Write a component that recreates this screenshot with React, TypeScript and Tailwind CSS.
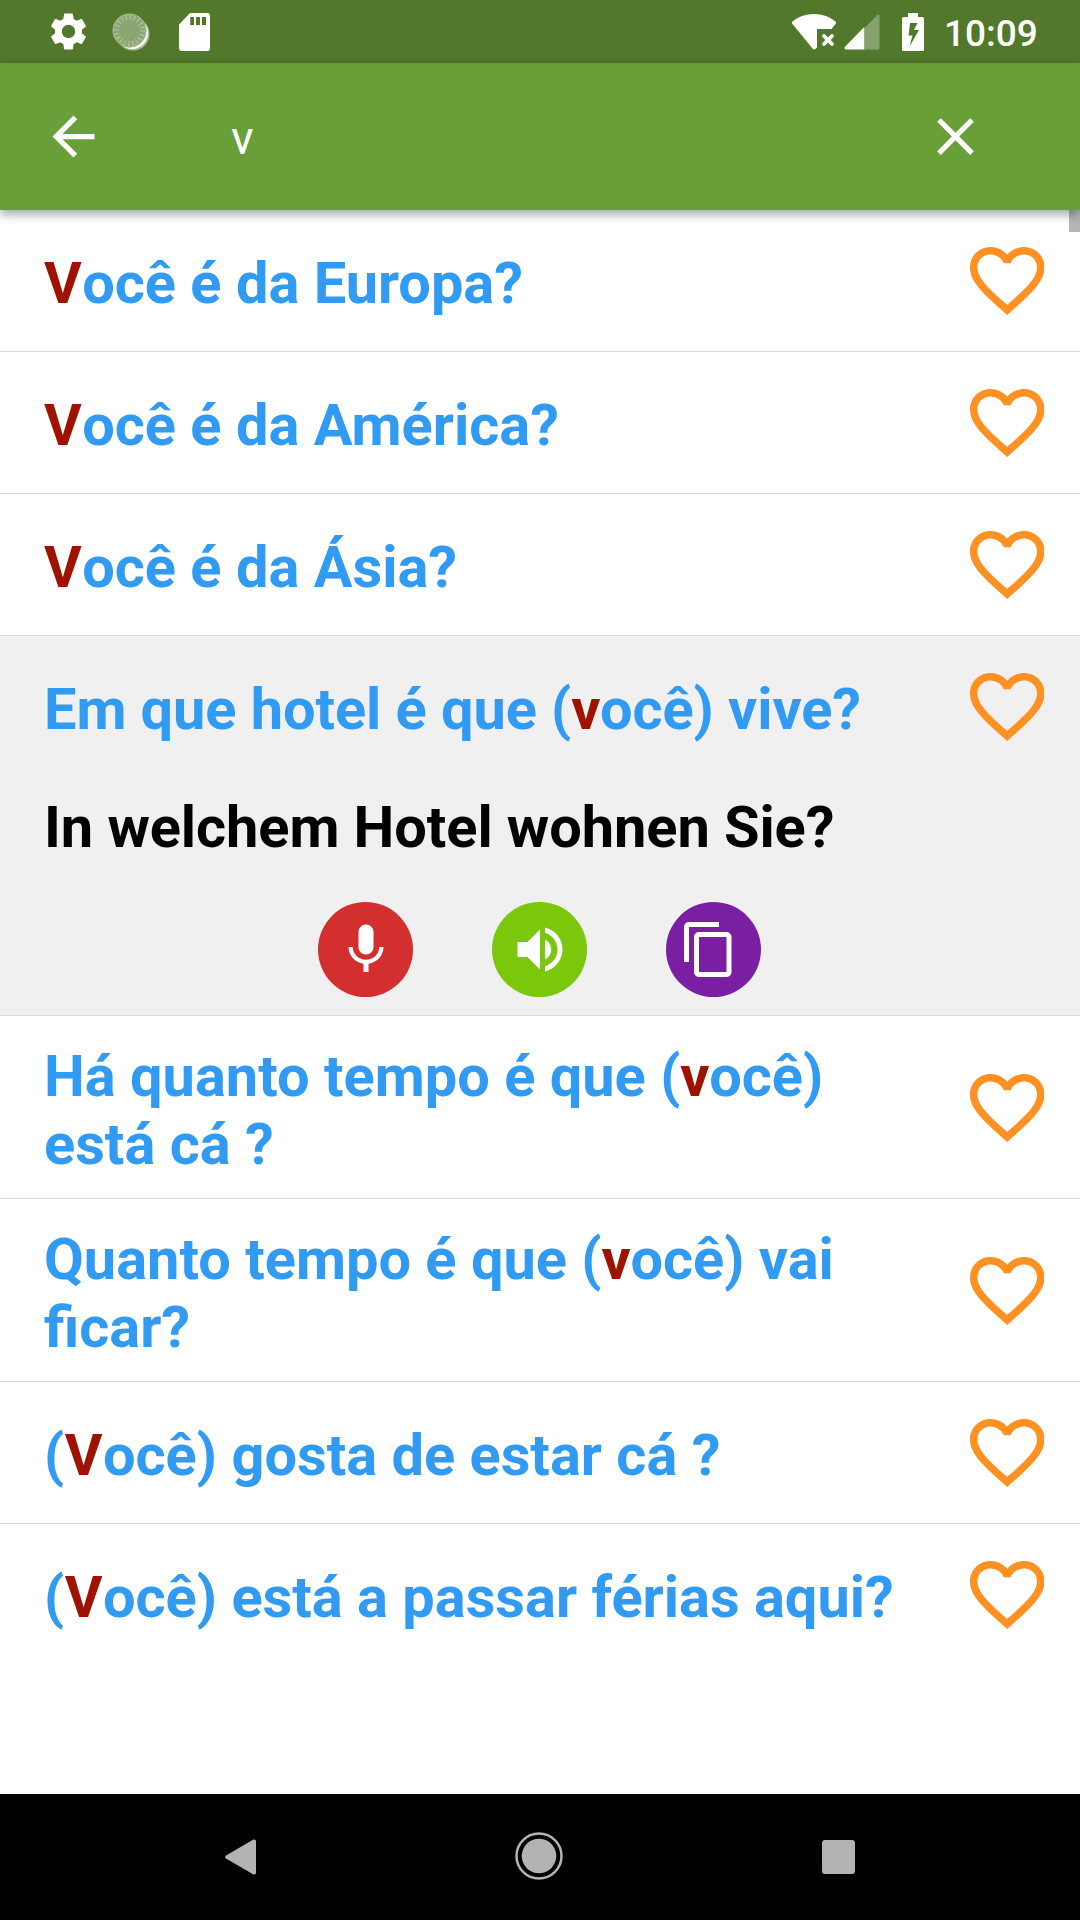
import React from 'react';

interface Phrase {
  id: number;
  text: string;
  translation?: string;
}

const QUERY = 'v';

const PHRASES: Phrase[] = [
  { id: 1, text: 'Você é da Europa?' },
  { id: 2, text: 'Você é da América?' },
  { id: 3, text: 'Você é da Ásia?' },
  { id: 4, text: 'Em que hotel é que (você) vive?', translation: 'In welchem Hotel wohnen Sie?' },
  { id: 5, text: 'Há quanto tempo é que (você) está cá ?' },
  { id: 6, text: 'Quanto tempo é que (você) vai ficar?' },
  { id: 7, text: '(Você) gosta de estar cá ?' },
  { id: 8, text: '(Você) está a passar férias aqui?' },
];

// Only the first occurrence of the query is coloured
const Highlighted: React.FC<{ text: string }> = ({ text }) => {
  const index = text.toLowerCase().indexOf(QUERY);
  if (index < 0) return <>{text}</>;
  const match = text.slice(index, index + QUERY.length);
  return (
    <>
      {text.slice(0, index)}
      <span className={`text-[#a01200] ${match === match.toUpperCase() ? 'mr-[0.4px]' : ''}`}>{match}</span>
      {text.slice(index + QUERY.length)}
    </>
  );
};

const HeartIcon = () => (
  <svg viewBox="2 3 20 18.35" preserveAspectRatio="none" className="w-[74.5px] h-[68px] shrink-0" fill="#ff9122">
    <path d="M16.500 3c-1.740 0-3.410.81-4.500 2.090C10.910 3.810 9.240 3 7.500 3 4.420 3 2 5.420 2 8.500c0 3.780 3.400 6.860 8.550 11.540L12 21.350l1.450-1.320C18.600 15.360 22 12.280 22 8.500 22 5.420 19.580 3 16.500 3zm-4.400 15.550l-.1.100-.1-.1C7.140 14.240 4 11.390 4 8.500 4 6.500 5.500 5 7.500 5c1.540 0 3.040.99 3.570 2.360h1.870C13.460 5.990 14.960 5 16.500 5c2 0 3.500 1.500 3.500 3.500 0 2.890-3.140 5.740-7.900 10.050z" />
  </svg>
);

const StatusBar = () => (
  <div className="h-[63px] bg-[#51782b] flex items-center justify-between text-white">
    <div className="flex items-center pl-[47px]">
      <svg viewBox="0 0 24 24" className="w-[43px] h-[45px]" fill="currentColor">
        <path d="M19.43 12.98c.04-.32.07-.64.07-.98s-.03-.66-.07-.98l2.11-1.65c.19-.15.24-.42.12-.64l-2-3.46c-.12-.22-.39-.3-.61-.22l-2.49 1c-.52-.4-1.08-.73-1.69-.98l-.38-2.65C14.46 2.18 14.25 2 14 2h-4c-.25 0-.46.18-.49.42l-.38 2.65c-.61.25-1.17.59-1.69.98l-2.49-1c-.23-.09-.49 0-.61.22l-2 3.46c-.13.22-.07.49.12.64l2.11 1.65c-.04.32-.07.65-.07.98s.03.66.07.98l-2.11 1.65c-.19.15-.24.42-.12.64l2 3.46c.12.22.39.3.61.22l2.49-1c.52.4 1.08.73 1.69.98l.38 2.65c.03.24.24.42.49.42h4c.25 0 .46-.18.49-.42l.38-2.65c.61-.25 1.17-.59 1.69-.98l2.49 1c.23.09.49 0 .61-.22l2-3.46c.12-.22.07-.49-.12-.64l-2.11-1.65zM12 15.700c-2.040 0-3.700-1.660-3.700-3.700s1.660-3.700 3.700-3.700 3.700 1.660 3.700 3.700-1.660 3.700-3.700 3.700z" />
      </svg>
      <svg viewBox="0 0 38 38" className="w-[38px] h-[38px] ml-[22px]">
        <circle cx="21" cy="21" r="16.5" fill="#a9bd95" />
        <circle cx="20" cy="20" r="16" fill="#fff" />
        <circle cx="17.5" cy="17.5" r="17" fill="#8ba673" />
        <circle cx="17.5" cy="17.5" r="16.4" fill="none" stroke="#a9bd95" strokeWidth="1" />
        <circle cx="17.5" cy="17.5" r="13" fill="none" stroke="#b5c7a4" strokeWidth="5" strokeDasharray="1.1 2.984" />
      </svg>
      <svg viewBox="0 0 31 38" className="w-[31px] h-[38px] ml-[29px]" fill="currentColor">
        <path fillRule="evenodd" d="M11 0H28Q31 0 31 3V35Q31 38 28 38H3Q0 38 0 35V11.5ZM11.2 4V12H15V4ZM17 4V12H21V4ZM23 4V12H27V4Z" />
      </svg>
    </div>
    <div className="flex items-center pr-[42px]">
      <svg viewBox="0 0 45 38" className="w-[45px] h-[38px]" fill="currentColor">
        <path d="M0.5 8.5Q9 1 22 1T43.5 8.5Q44.5 9.5 43.5 11L39.5 16H25V34.5L23.5 36Q22 37 20.5 35.5L0.5 11Q-.5 9.5.5 8.5Z" />
        <path d="M32 23L40 31M40 23L32 31" stroke="currentColor" strokeWidth="3.8" strokeLinecap="round" />
      </svg>
      <svg viewBox="0 0 36 36" className="w-[36px] h-[36px] ml-[7px]">
        <path d="M20 14.5L33 1.2Q35.5-.5 35.5 2V34Q35.5 35.5 34 35.5H20Z" fill="#86a16b" />
        <path d="M20.2 13V35.5H2Q-.5 35 1 32.8Z" fill="#fff" />
      </svg>
      <svg viewBox="0 0 22 38" className="w-[22px] h-[38px] ml-[22px]" fill="currentColor">
        <path fillRule="evenodd" d="M6 0H16V4H20.5Q22 4 22 5.5V36.5Q22 38 20.5 38H1.5Q0 38 0 36.5V5.5Q0 4 1.5 4H6ZM8 10L6.5 22.5H10.5L7.5 33.5L17 17H12L15.5 10Z" />
      </svg>
      <span className="w-[94px] text-[37px] leading-[44px] ml-[20px] mt-[5px] font-medium whitespace-nowrap">10:09</span>
    </div>
  </div>
);

const SearchBar = () => (
  <div className="h-[147px] bg-[#689f38] text-white flex items-center relative z-10 shadow-[0_4px_10px_rgba(0,0,0,0.38)]">
    <svg viewBox="0 0 24 24" className="w-[63px] h-[63px] ml-[42px]" fill="currentColor">
      <path d="M20 11H7.830l5.590-5.590L12 4l-8 8 8 8 1.410-1.410L7.830 13H20v-2z" />
    </svg>
    <span className="grow pl-[126px] pt-[2px] text-[47px] leading-[56px]">{QUERY}</span>
    <svg viewBox="0 0 24 24" className="w-[63px] h-[63px] mr-[93px]" fill="currentColor">
      <path d="M19 6.410L17.590 5 12 10.590 6.410 5 5 6.410 10.590 12 5 17.590 6.410 19 12 13.410 17.590 19 19 17.590 13.410 12z" />
    </svg>
  </div>
);

const Actions = () => (
  <div className="flex justify-center gap-[79px] mt-[41px] pr-px">
    <button className="w-[95px] h-[95px] rounded-full bg-[#d32f2f] flex items-center justify-center text-white">
      <svg viewBox="0 0 24 24" className="w-[60px] h-[60px] -translate-y-[0.5px]" fill="currentColor">
        <path d="M12 14c1.660 0 2.990-1.340 2.990-3L15 5c0-1.660-1.340-3-3-3S9 3.340 9 5v6c0 1.660 1.340 3 3 3zm5.300-3c0 3-2.540 5.100-5.300 5.100S6.700 14 6.700 11H5c0 3.410 2.720 6.230 6 6.720V21h2v-3.280c3.280-.48 6-3.300 6-6.720h-1.700z" />
      </svg>
    </button>
    <button className="w-[95px] h-[95px] rounded-full bg-[#7ac70c] flex items-center justify-center text-white">
      <svg viewBox="0 0 24 24" className="w-[60px] h-[60px] -translate-y-[0.5px]" fill="currentColor">
        <path d="M3 9v6h4l5 5V4L7 9H3zm13.500 3c0-1.770-1.020-3.290-2.500-4.030v8.050c1.480-.73 2.500-2.250 2.500-4.020zM14 3.230v2.060c2.890.86 5 3.540 5 6.710s-2.110 5.850-5 6.710v2.060c4.010-.91 7-4.490 7-8.770s-2.990-7.860-7-8.770z" />
      </svg>
    </button>
    <button className="w-[95px] h-[95px] rounded-full bg-[#7b1fa2] flex items-center justify-center text-white">
      <svg viewBox="0 0 24 24" className="w-[60px] h-[60px] -translate-x-[5px] -translate-y-[0.5px]" fill="currentColor">
        <path d="M16 1H4c-1.100 0-2 .9-2 2v14h2V3h12V1zm3 4H8c-1.100 0-2 .9-2 2v14c0 1.100.9 2 2 2h11c1.100 0 2-.9 2-2V7c0-1.100-.9-2-2-2zm0 16H8V7h11v14z" />
      </svg>
    </button>
  </div>
);

const PhraseRow: React.FC<{ phrase: Phrase; last: boolean }> = ({ phrase, last }) => (
  <li
    className={`min-h-[142px] ${phrase.translation ? 'bg-[#f0f0f0] tracking-[-0.08px]' : 'bg-white'} ${
      last ? '' : 'border-b border-[#d8d8d8]'
    }`}
  >
    <div className="flex items-center min-h-[140px] pl-[44px] pr-[36px]">
      <p className="w-[860px] pt-[26px] pb-5 text-[57.75px] leading-[68px] font-bold text-[#319af2]">
        <Highlighted text={phrase.text} />
      </p>
      <div className="ml-auto pt-px">
        <HeartIcon />
      </div>
    </div>
    {phrase.translation && (
      <div className="pt-[17px] pb-[18px]">
        <p className="pl-[44px] text-[57.75px] leading-[68px] font-bold text-black">{phrase.translation}</p>
        <Actions />
      </div>
    )}
  </li>
);

const NavBar = () => (
  <div className="h-[126px] bg-black flex items-center justify-between px-[225px] text-[#b3b3b3]">
    <svg viewBox="0 0 32 36" className="w-[32px] h-[36px]" fill="currentColor">
      <path d="M1 16.500L28 .8Q31 -.5 31 2.500V33.500Q31 36.500 28 35.200L1 19.500Q-.8 18 1 16.500Z" />
    </svg>
    <svg viewBox="0 0 48 48" className="w-[48px] h-[48px] mb-[2px] mr-px" fill="none">
      <circle cx="24" cy="24" r="22.500" stroke="currentColor" strokeWidth="2.500" />
      <circle cx="24" cy="24" r="17.300" fill="currentColor" />
    </svg>
    <div className="w-[33px] h-[34px] rounded-[3px] bg-[#b3b3b3]" />
  </div>
);

export default function App() {
  return (
    <div className="w-[1080px] h-[1920px] flex flex-col bg-white overflow-hidden font-[Roboto,sans-serif]">
      <StatusBar />
      <SearchBar />
      <div className="grow relative">
        <ul>
          {PHRASES.map((phrase, i) => (
            <PhraseRow key={phrase.id} phrase={phrase} last={i === PHRASES.length - 1} />
          ))}
        </ul>
        {/* scrollbar thumb */}
        <div className="absolute top-0 right-0 w-[11px] h-[22px] bg-[#b6b6b6]" />
      </div>
      <NavBar />
    </div>
  );
}
